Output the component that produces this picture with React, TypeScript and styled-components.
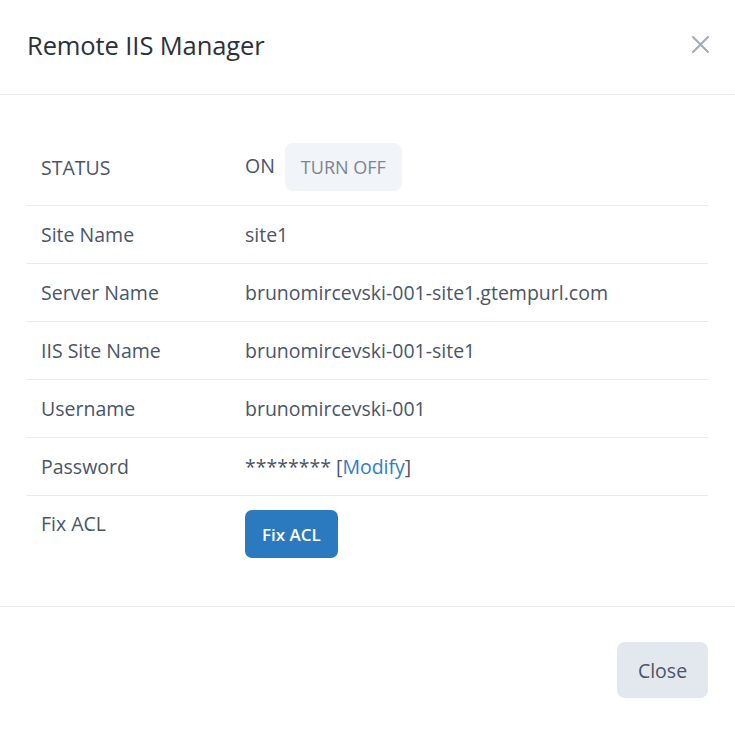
import styled, { createGlobalStyle } from 'styled-components';

const GlobalStyle = createGlobalStyle`
  html, body {
    margin: 0;
    padding: 0;
    background: #ffffff;
  }
  body {
    font-family: 'Open Sans', 'Liberation Sans', sans-serif;
    color: #4a5568;
  }
  * {
    box-sizing: border-box;
  }
`;

type Row = {
  label: string;
  value: React.ReactNode;
  top?: boolean;
};

const App: React.FC = (): JSX.Element => {
  const rows: Row[] = [
    {
      label: 'STATUS',
      value: (
        <StatusWrap>
          <span>ON</span>
          <TurnOffButton type="button">TURN OFF</TurnOffButton>
        </StatusWrap>
      ),
    },
    { label: 'Site Name', value: 'site1' },
    { label: 'Server Name', value: 'brunomircevski-001-site1.gtempurl.com' },
    { label: 'IIS Site Name', value: 'brunomircevski-001-site1' },
    { label: 'Username', value: 'brunomircevski-001' },
    {
      label: 'Password',
      value: (
        <>
          ******** [<Link href="#">Modify</Link>]
        </>
      ),
    },
    { label: 'Fix ACL', value: <PrimaryButton type="button">Fix ACL</PrimaryButton>, top: true },
  ];

  return (
    <>
      <GlobalStyle />
      <Modal>
        <Header>
          <Title>Remote IIS Manager</Title>
          <CloseIcon type="button" aria-label="close">
            <svg width="17" height="17" viewBox="0 0 17 17">
              <path d="M1 1 L16 16 M16 1 L1 16" stroke="#a0aab8" strokeWidth="2" strokeLinecap="round" />
            </svg>
          </CloseIcon>
        </Header>
        <Body>
          <InfoTable>
            {rows.map((row, i) => (
              <InfoRow
                key={row.label}
                $top={row.top}
                $first={i === 0}
                $last={i === rows.length - 1}
              >
                <Label>{row.label}</Label>
                <Value>{row.value}</Value>
              </InfoRow>
            ))}
          </InfoTable>
        </Body>
        <Footer>
          <SecondaryButton type="button">Close</SecondaryButton>
        </Footer>
      </Modal>
    </>
  );
};

export default App;

const Modal = styled.div`
  width: 735px;
  background: #ffffff;
`;

const Header = styled.header`
  height: 95px;
  padding: 0 26px 0 27px;
  display: flex;
  align-items: center;
  justify-content: space-between;
  border-bottom: 1px solid #e8eaed;
`;

const Title = styled.h1`
  margin: 0 0 4px;
  font-size: 25.5px;
  font-weight: 400;
  color: #2a313c;
  letter-spacing: -0.1px;
`;

const CloseIcon = styled.button`
  border: none;
  background: none;
  padding: 0;
  margin-bottom: 6px;
  display: flex;
  cursor: pointer;
`;

const Body = styled.section`
  padding: 32px 27px 33px;
  border-bottom: 1px solid #e8eaed;
`;

const InfoTable = styled.div`
  display: flex;
  flex-direction: column;
`;

const InfoRow = styled.div<{ $top?: boolean; $first?: boolean; $last?: boolean }>`
  display: grid;
  grid-template-columns: 204px 1fr;
  align-items: ${({ $top }) => ($top ? 'start' : 'center')};
  padding: ${({ $top, $first }) =>
    $first ? '16px 14px 14px' : $top ? '14px 14px 15px' : '15px 14px'};
  min-height: 58px;
  border-bottom: ${({ $last }) => ($last ? 'none' : '1px solid #e8eaed')};
  font-size: 19.5px;
  line-height: 27px;
`;

const Label = styled.div`
  color: #4a5568;
`;

const Value = styled.div`
  color: #4a5568;
`;

const StatusWrap = styled.div`
  display: flex;
  align-items: center;
  gap: 10px;

  > span {
    margin-top: -4px;
  }
`;

const TurnOffButton = styled.button`
  height: 48px;
  padding: 0 16px;
  border: none;
  border-radius: 8px;
  background: #f1f4f8;
  color: #7b8594;
  font-family: inherit;
  font-size: 18px;
  cursor: pointer;
`;

const Link = styled.a`
  color: #2e7cc4;
  text-decoration: none;
`;

const PrimaryButton = styled.button`
  height: 48px;
  padding: 0 17px;
  border: none;
  border-radius: 7px;
  background: #2b79be;
  color: #ffffff;
  font-family: inherit;
  font-size: 17px;
  font-weight: 600;
  cursor: pointer;
`;

const Footer = styled.footer`
  display: flex;
  justify-content: flex-end;
  padding: 35px 27px 31px;
`;

const SecondaryButton = styled.button`
  width: 91px;
  height: 56px;
  border: none;
  border-radius: 8px;
  background: #e3e8ee;
  color: #4a5568;
  font-family: inherit;
  font-size: 19.5px;
  cursor: pointer;
`;
